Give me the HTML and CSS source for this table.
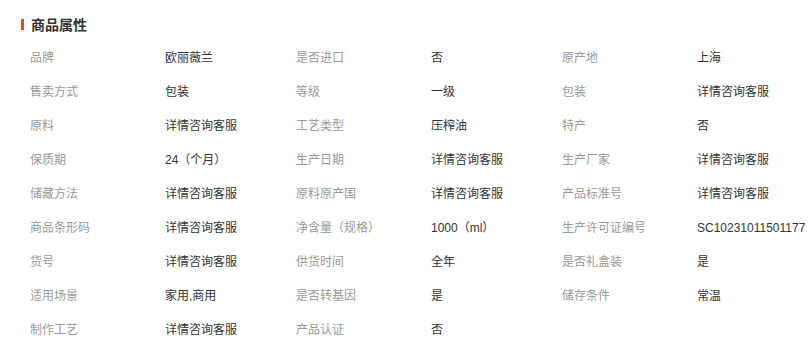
FILE: index.html
```html
<!DOCTYPE html>
<html lang="zh-CN">
<head>
<meta charset="utf-8">
<title>商品属性</title>
<link rel="stylesheet" href="styles.css">
</head>
<body>
<section class="attrs">
  <h2 class="attrs-title"><span class="bar"></span>商品属性</h2>
  <div class="attrs-grid">
    <div class="k">品牌</div><div class="v">欧丽薇兰</div>
    <div class="k">是否进口</div><div class="v">否</div>
    <div class="k">原产地</div><div class="v">上海</div>

    <div class="k">售卖方式</div><div class="v">包装</div>
    <div class="k">等级</div><div class="v">一级</div>
    <div class="k">包装</div><div class="v">详情咨询客服</div>

    <div class="k">原料</div><div class="v">详情咨询客服</div>
    <div class="k">工艺类型</div><div class="v">压榨油</div>
    <div class="k">特产</div><div class="v">否</div>

    <div class="k">保质期</div><div class="v">24（个月）</div>
    <div class="k">生产日期</div><div class="v">详情咨询客服</div>
    <div class="k">生产厂家</div><div class="v">详情咨询客服</div>

    <div class="k">储藏方法</div><div class="v">详情咨询客服</div>
    <div class="k">原料原产国</div><div class="v">详情咨询客服</div>
    <div class="k">产品标准号</div><div class="v">详情咨询客服</div>

    <div class="k">商品条形码</div><div class="v">详情咨询客服</div>
    <div class="k">净含量（规格）</div><div class="v">1000（ml）</div>
    <div class="k">生产许可证编号</div><div class="v">SC10231011501177</div>

    <div class="k">货号</div><div class="v">详情咨询客服</div>
    <div class="k">供货时间</div><div class="v">全年</div>
    <div class="k">是否礼盒装</div><div class="v">是</div>

    <div class="k">适用场景</div><div class="v">家用,商用</div>
    <div class="k">是否转基因</div><div class="v">是</div>
    <div class="k">储存条件</div><div class="v">常温</div>

    <div class="k">制作工艺</div><div class="v">详情咨询客服</div>
    <div class="k">产品认证</div><div class="v">否</div>
  </div>
</section>
</body>
</html>
```
FILE: styles.css
```css
html, body {
  margin: 0;
  padding: 0;
  background: #fff;
}
body {
  font-family: "Liberation Sans", "Noto Sans CJK SC", sans-serif;
  font-size: 12px;
  color: #333;
  overflow: hidden;
}
.attrs {
  width: 808px;
}
.attrs-title {
  margin: 12px 0 0 21px;
  height: 24px;
  line-height: 24px;
  font-size: 14px;
  font-weight: bold;
  color: #333;
  font-family: "Noto Sans CJK SC", sans-serif;
  display: flex;
  align-items: center;
}
.bar {
  display: inline-block;
  width: 3px;
  height: 11px;
  background: #ff4400;
  margin-right: 7px;
}
.attrs-grid {
  margin-top: 5px;
  padding-left: 30px;
  display: grid;
  grid-template-columns: 135px 131px 135px 131px 135px 1fr;
  grid-auto-rows: 34px;
  line-height: 34px;
}
.k {
  color: #999;
  white-space: nowrap;
}
.v {
  color: #333;
  white-space: nowrap;
}
```
